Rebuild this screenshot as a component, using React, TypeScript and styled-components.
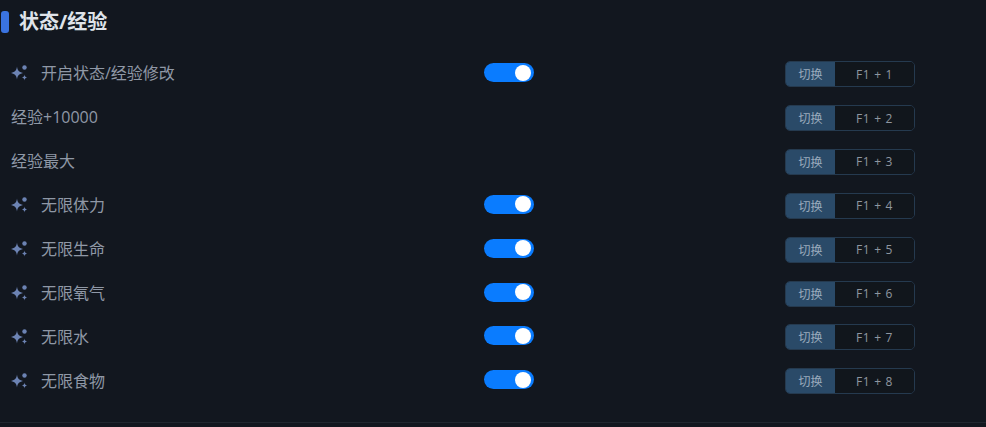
import React, { FC } from 'react';
import styled, { createGlobalStyle } from 'styled-components';

const GlobalStyle = createGlobalStyle`
  html, body {
    margin: 0;
    padding: 0;
    background: #12171f;
  }
  body {
    font-family: "Open Sans", "Noto Sans CJK SC", sans-serif;
  }
`;

const Root = styled.div`
  width: 986px;
  height: 427px;
  box-sizing: border-box;
  overflow: hidden;
  background: #12171f;
  padding-top: 10px;
`;

const Section = styled.section`
  height: 413px;
  box-sizing: border-box;
  border-bottom: 1px solid #20262f;
`;

const Title = styled.h2`
  display: flex;
  align-items: center;
  gap: 10px;
  height: 24px;
  margin: 0 0 17.3px 1px;
  color: #dfe3e9;
  font-size: 20px;
  font-weight: 700;
  line-height: 24px;
`;

const TitleMark = styled.span`
  width: 8px;
  height: 22px;
  border-radius: 3px;
  background: #3a73e0;
`;

const Row = styled.div`
  display: grid;
  grid-template-columns: 473px 301px 130px;
  align-items: center;
  height: 43.875px;
  padding-left: 11px;
`;

const Label = styled.div`
  display: flex;
  align-items: center;
  gap: 14px;
  height: 22px;
  margin-top: 0.4px;
  color: #8f98a6;
  font-size: 16px;
  line-height: 22px;
`;

const Switch = styled.span`
  display: flex;
  align-items: center;
  justify-content: flex-end;
  width: 50px;
  height: 19px;
  margin-bottom: 1px;
  box-sizing: border-box;
  padding-right: 3px;
  border-radius: 10px;
  background: #0a7cff;
`;

const Knob = styled.span`
  width: 16px;
  height: 16px;
  border-radius: 50%;
  background: #ffffff;
`;

const Hotkey = styled.div`
  display: flex;
  height: 26px;
  margin-top: 2px;
  box-sizing: border-box;
  overflow: hidden;
  border: 1px solid #253a4f;
  border-radius: 5px;
  font-size: 12px;
`;

const HotkeyAction = styled.span`
  display: flex;
  align-items: center;
  justify-content: center;
  width: 49px;
  background: #2a4a68;
  color: #9aabbd;
`;

const HotkeyKeys = styled.span`
  flex: 1;
  display: flex;
  align-items: center;
  justify-content: center;
  background: #11161c;
  color: #8f96a0;
  letter-spacing: 0.7px;
  white-space: pre;
`;

const Sparkle: FC = () => (
  <svg width="16" height="16" viewBox="0 0 16 16" fill="#6c83b3">
    <path d="M6 1.5 C6.6 5.6 7.6 6.8 12 8 C7.6 9.2 6.6 10.4 6 14.5 C5.4 10.4 4.4 9.2 0 8 C4.4 6.8 5.4 5.6 6 1.5 Z" />
    <circle cx="13.5" cy="2.5" r="2.2" />
    <path d="M13.5 9.5 C13.8 11.4 14.2 11.8 16 12.5 C14.2 13.2 13.8 13.6 13.5 15.5 C13.2 13.6 12.8 13.2 11 12.5 C12.8 11.8 13.2 11.4 13.5 9.5 Z" />
  </svg>
);

interface CheatRow {
  label: string,
  hotkey: string,
  toggle: boolean,
}

const rows: CheatRow[] = [
  { label: '开启状态/经验修改', hotkey: 'F1 + 1', toggle: true },
  { label: '经验+10000', hotkey: 'F1 + 2', toggle: false },
  { label: '经验最大', hotkey: 'F1 + 3', toggle: false },
  { label: '无限体力', hotkey: 'F1 + 4', toggle: true },
  { label: '无限生命', hotkey: 'F1 + 5', toggle: true },
  { label: '无限氧气', hotkey: 'F1 + 6', toggle: true },
  { label: '无限水', hotkey: 'F1 + 7', toggle: true },
  { label: '无限食物', hotkey: 'F1 + 8', toggle: true },
];

const App: FC = () => {
  return (
    <Root>
      <GlobalStyle />
      <Section>
        <Title>
          <TitleMark />
          状态/经验
        </Title>
        {rows.map((row) => (
          <Row key={row.hotkey}>
            <Label>
              {row.toggle && <Sparkle />}
              {row.label}
            </Label>
            <div>
              {row.toggle && (
                <Switch>
                  <Knob />
                </Switch>
              )}
            </div>
            <Hotkey>
              <HotkeyAction>切换</HotkeyAction>
              <HotkeyKeys>{row.hotkey}</HotkeyKeys>
            </Hotkey>
          </Row>
        ))}
      </Section>
    </Root>
  );
};

export default App;
